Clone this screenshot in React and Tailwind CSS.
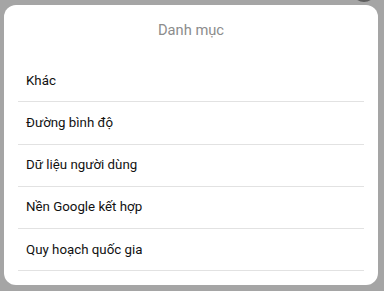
export default function App() {
  const items = ["Khác", "Đường bình độ", "Dữ liệu người dùng", "Nền Google kết hợp", "Quy hoạch quốc gia"];
  return (
    <div className="relative w-[384px] h-[291px] bg-[#a5a5a5] overflow-hidden pt-[5px] pl-[4px] font-['Roboto',sans-serif]">
      <div className="absolute left-[352px] top-[-22px] w-[24px] h-[24px] rounded-full bg-[#5e5e5e]" />
      <div className="relative w-[374px] h-[280px] bg-white rounded-[12px] flex flex-col">
        <div className="h-[55px] pt-[15px] flex justify-center">
          <span className="text-[14.7px] leading-[20px] text-[#8c8c8c]">Danh mục</span>
        </div>
        <div className="flex flex-col px-[14px]">
          {items.map((t) => (
            <div key={t} className="h-[42.25px] flex items-center border-b border-[#e2e2e2] pl-[8px]">
              <span className="text-[13.3px] leading-[18px] text-[#111]">{t}</span>
            </div>
          ))}
        </div>
      </div>
    </div>
  );
}
